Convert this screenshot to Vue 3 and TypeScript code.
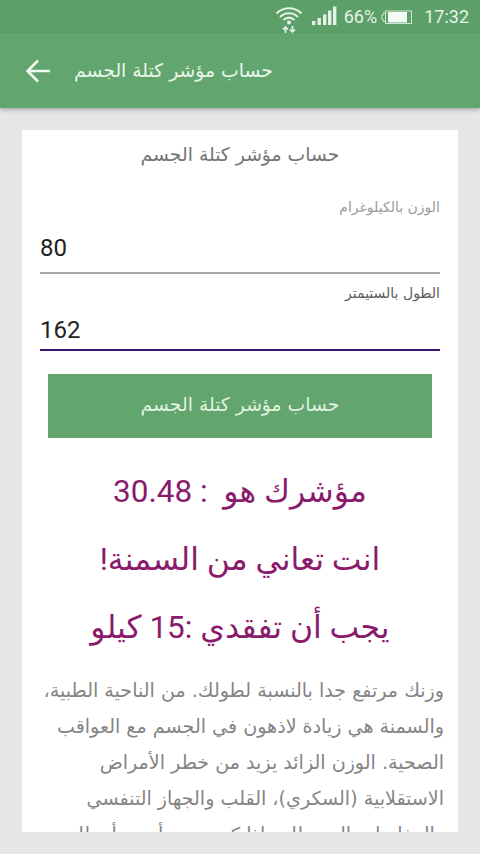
<script setup lang="ts">
const title = 'حساب مؤشر كتلة الجسم'
const fields = [
  { label: 'الوزن بالكيلوغرام', value: '80', active: false },
  { label: 'الطول بالستيمتر', value: '162', active: true },
]
const results = ['مؤشرك هو  : 30.48', 'انت تعاني من السمنة!', 'يجب أن تفقدي :15 كيلو']
const lines = [
  'وزنك مرتفع جدا بالنسبة لطولك. من الناحية الطبية،',
  'والسمنة هي زيادة لاذهون في الجسم مع العواقب',
  'الصحية. الوزن الزائد يزيد من خطر الأمراض',
  'الاستقلابية (السكري)، القلب والجهاز التنفسي',
  'والمفاصل والسرطان. إذا كنت تريد أن تبدأ نظام',
]
</script>

<template>
  <div class="screen">
    <header class="status">
      <svg class="wifi" width="30" height="30" viewBox="0 0 30 30" fill="none" stroke="#e4f3e6">
        <path d="M2.500 10.500C9.500 3.500 20.500 3.500 27.500 10.500" stroke-width="2" />
        <path d="M6 14C11 9 19 9 24 14" stroke-width="2" />
        <path d="M9.500 17C13 14 17 14 20.500 17" stroke-width="2" />
        <circle cx="15" cy="19.500" r="2" fill="#e4f3e6" stroke="none" />
        <path d="M11.500 30V24.500M9 26.500L11.500 24L14 26.500M18.500 23V28.500M16 26.500L18.500 29L21 26.500" stroke-width="1.700" />
      </svg>
      <svg class="signal" width="26" height="20" viewBox="0 0 26 20" fill="#e4f3e6">
        <rect x="0" y="15" width="3.400" height="4" />
        <rect x="5.500" y="12" width="3.400" height="7" />
        <rect x="11" y="8.500" width="3.400" height="10.500" />
        <rect x="16" y="4.500" width="3.400" height="14.500" />
        <rect x="21" y="0.500" width="3.400" height="18.500" />
      </svg>
      <span class="pct">66%</span>
      <svg class="battery" width="32" height="16" viewBox="0 0 32 16" fill="none">
        <path d="M4 4H2V6.500H.8V10H2V12.500H4" stroke="#cfe8d2" stroke-width="1" />
        <rect x="4.500" y="2" width="26" height="12.500" stroke="#cfe8d2" stroke-width="1" />
        <rect x="7" y="3" width="19" height="10.500" fill="#f4faf4" />
      </svg>
      <span class="time">17:32</span>
    </header>

    <nav class="toolbar">
      <svg class="back" width="26" height="26" viewBox="0 0 26 26" fill="none" stroke="#f0faf0" stroke-width="2.600">
        <path d="M25 13H3.500M13 2.500L2.500 13L13 23.500" />
      </svg>
      <span class="bar-title" dir="rtl">{{ title }}</span>
    </nav>

    <main class="content">
      <section class="card" dir="rtl">
        <h1 class="heading">{{ title }}</h1>
        <div v-for="f in fields" :key="f.label" class="field" :class="{ active: f.active }">
          <label class="label">{{ f.label }}</label>
          <div class="value" dir="ltr">{{ f.value }}</div>
        </div>
        <button class="submit" type="button">{{ title }}</button>
        <div class="results">
          <p v-for="r in results" :key="r" class="result">{{ r }}</p>
        </div>
        <div class="article">
          <p v-for="l in lines" :key="l" class="line">{{ l }}</p>
        </div>
      </section>
    </main>
  </div>
</template>

<style scoped>
.screen {
  width: 480px;
  height: 854px;
  display: flex;
  flex-direction: column;
  background: #e6e6e6;
  overflow: hidden;
  font-family: "DejaVu Sans", sans-serif;
}
.status {
  height: 33px;
  flex: none;
  display: flex;
  align-items: center;
  justify-content: flex-end;
  padding-right: 11px;
  background: #5c9f68;
  color: #e4f3e6;
}
.wifi { margin-right: 8px; margin-top: 3px; }
.signal { margin-right: 6px; margin-top: -1px; }
.pct { font: 18px "Roboto", sans-serif; margin-right: 4px; }
.battery { margin-right: 11px; }
.time { font: 18px "Roboto", sans-serif; }
.toolbar {
  height: 75px;
  flex: none;
  display: flex;
  align-items: center;
  padding-left: 25px;
  gap: 23px;
  background: #63a56e;
  box-shadow: 0 2px 4px rgba(0, 0, 0, 0.25);
  position: relative;
}
.bar-title {
  font-size: 18.800px;
  color: #e8f6e8;
}
.content {
  flex: none;
  height: 724px;
  padding: 22px 22px 0;
  box-sizing: border-box;
}
.card {
  height: 702px;
  overflow: hidden;
  background: #fff;
  padding: 0 18px;
  box-sizing: border-box;
}
.heading {
  margin: 0;
  padding-top: 14px;
  height: 68px;
  box-sizing: border-box;
  text-align: center;
  font-size: 18.800px;
  font-weight: 400;
  color: #767676;
}
.field { margin-bottom: 10px; }
.label {
  display: block;
  font-size: 14px;
  line-height: 18px;
  color: #9b9b9b;
}
.active .label { color: #5c5c5c; }
.value {
  font: 24px/30px "Roboto", sans-serif;
  color: #222;
  height: 58px;
  padding-top: 17px;
  box-sizing: border-box;
  border-bottom: 2px solid #a8a8a8;
}
.active .value { border-bottom-color: #3b1470; height: 49px; padding-top: 13px; }
.submit {
  display: block;
  width: 384px;
  height: 64px;
  margin: 23px auto 0;
  border: 0;
  background: #63a56e;
  color: #dff3df;
  font-family: inherit;
  font-size: 18.800px;
  padding: 0 0 4px;
}
.results {
  margin-top: 29px;
  display: flex;
  flex-direction: column;
}
.result {
  margin: 0;
  height: 68px;
  line-height: 50px;
  text-align: center;
  font-family: "Roboto", "DejaVu Sans", sans-serif;
  font-size: 31.500px;
  color: #8a1a6c;
  white-space: pre;
}
.article { margin-top: 2px; margin-right: -4px; margin-left: -14px; }
.line {
  margin: 0;
  font-size: 19.100px;
  line-height: 36px;
  color: #858585;
  white-space: nowrap;
}
</style>
